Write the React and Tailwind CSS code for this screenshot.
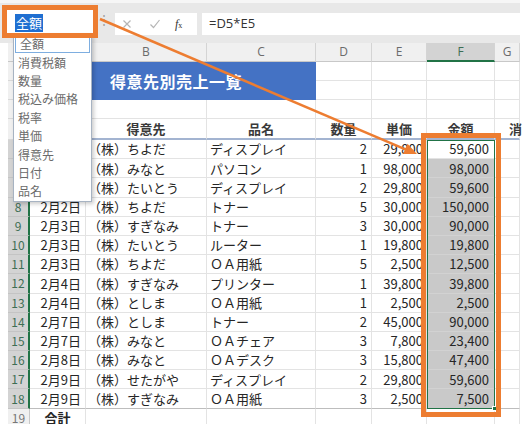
import React from "react";

const data = [
  ["2月1日", "（株）ちよだ", "ディスプレイ", "2", "29,800", "59,600"],
  ["2月1日", "（株）みなと", "パソコン", "1", "98,000", "98,000"],
  ["2月2日", "（株）たいとう", "ディスプレイ", "2", "29,800", "59,600"],
  ["2月2日", "（株）ちよだ", "トナー", "5", "30,000", "150,000"],
  ["2月3日", "（株）すぎなみ", "トナー", "3", "30,000", "90,000"],
  ["2月3日", "（株）たいとう", "ルーター", "1", "19,800", "19,800"],
  ["2月3日", "（株）ちよだ", "ＯＡ用紙", "5", "2,500", "12,500"],
  ["2月4日", "（株）すぎなみ", "プリンター", "1", "39,800", "39,800"],
  ["2月4日", "（株）としま", "ＯＡ用紙", "1", "2,500", "2,500"],
  ["2月7日", "（株）としま", "トナー", "2", "45,000", "90,000"],
  ["2月7日", "（株）みなと", "ＯＡチェア", "3", "7,800", "23,400"],
  ["2月8日", "（株）みなと", "ＯＡデスク", "3", "15,800", "47,400"],
  ["2月9日", "（株）せたがや", "ディスプレイ", "2", "29,800", "59,600"],
  ["2月9日", "（株）すぎなみ", "ＯＡ用紙", "3", "2,500", "7,500"],
];

const names = ["全額", "消費税額", "数量", "税込み価格", "税率", "単価", "得意先", "日付", "品名"];

const cellBase =
  "flex items-center border-r border-b border-[#e3e3e3] whitespace-nowrap text-[13px] text-[#262626]";

function RowHead({ n, selected, last }) {
  return (
    <div
      className={
        "flex items-center justify-center text-[12px] border-b " +
        (selected
          ? "bg-[#d3d3d3] text-[#3d6e54] border-r-2 border-r-[#217346] border-b-[#c4c4c4]"
          : "bg-[#f0f0f0] text-[#777] border-r border-r-[#c8c8c8] border-b-[#d8d8d8]")
      }
    >
      {n}
    </div>
  );
}

export default function App() {
  const cells = [];
  // column header row
  cells.push(<div key="corner" className="bg-[#f0f0f0] border-r border-b border-[#c8c8c8]" />);
  ["A", "B", "C", "D", "E", "F", "G"].forEach((c) => {
    const sel = c === "F";
    cells.push(
      <div
        key={"h" + c}
        className={
          "flex items-center justify-center text-[12px] font-['Open_Sans',sans-serif] border-r border-[#d4d4d4] " +
          (sel
            ? "bg-[#d3d3d3] text-[#3d6e54] border-b-2 border-b-[#217346]"
            : "bg-[#f0f0f0] text-[#6b6b6b] border-b border-b-[#c8c8c8]")
        }
      >
        {c}
      </div>
    );
  });
  // title
  cells.push(
    <div
      key="title"
      className="col-start-3 col-span-2 row-start-2 row-span-2 bg-[#4472c4] flex items-center pl-[24px] text-white text-[16px] font-bold tracking-[0.5px]"
    >
      得意先別売上一覧
    </div>
  );
  // rows 1-3
  [1, 2, 3].forEach((r) => {
    cells.push(<RowHead key={"rh" + r} n={r} />);
    const cols = r === 3 ? ["A", "B", "C", "D", "E", "F", "G"] : ["A", "D", "E", "F", "G"];
    cols.forEach((c) => cells.push(<div key={r + c} className={cellBase} />));
  });
  // row 4 header
  cells.push(<RowHead key="rh4" n={4} />);
  const hdr = ["", "得意先", "品名", "数量", "単価", "金額", "消"];
  hdr.forEach((h, i) => {
    cells.push(
      <div
        key={"r4" + i}
        className={
          "flex items-center whitespace-nowrap text-[13px] font-bold text-[#3a3a3a] border-r border-r-[#e3e3e3] border-b-2 border-b-[#a3b4d1] " +
          (i === 6 ? "pl-[14px] overflow-visible" : "justify-center")
        }
      >
        {h}
      </div>
    );
  });
  // data rows
  data.forEach((row, idx) => {
    const r = idx + 5;
    const last = r === 18;
    const bb = last ? " border-b-[#bdbdbd]" : "";
    cells.push(<RowHead key={"rh" + r} n={r} selected />);
    cells.push(
      <div key={r + "A"} className={cellBase + bb + " justify-end pr-[4px]"}>
        {row[0]}
      </div>
    );
    cells.push(
      <div key={r + "B"} className={cellBase + bb + " pl-[2px]"}>
        {row[1]}
      </div>
    );
    cells.push(
      <div key={r + "C"} className={cellBase + bb + " pl-[3px]"}>
        {row[2]}
      </div>
    );
    cells.push(
      <div key={r + "D"} className={cellBase + bb + " justify-end pr-[4px]"}>
        {row[3]}
      </div>
    );
    cells.push(
      <div key={r + "E"} className={cellBase + bb + " justify-end pr-[3px]"}>
        {row[4]}
      </div>
    );
    cells.push(
      <div
        key={r + "F"}
        className={
          cellBase +
          bb +
          " justify-end pr-[5px] " +
          (r === 5 ? "bg-white" : "bg-[#c9c9c9] border-b-[#d2d2d2]")
        }
      >
        {row[5]}
      </div>
    );
    cells.push(<div key={r + "G"} className={cellBase + bb} />);
  });
  // row 19
  cells.push(<RowHead key="rh19" n={19} />);
  cells.push(
    <div key="19A" className={cellBase + " justify-center font-bold"}>
      合計
    </div>
  );
  ["B", "C", "D", "E", "F", "G"].forEach((c) => cells.push(<div key={"19" + c} className={cellBase} />));

  return (
    <div className="relative w-[525px] h-[424px] overflow-hidden bg-white font-['Noto_Sans_CJK_JP',sans-serif]">
      {/* formula bar */}
      <div className="flex items-start w-[520px] h-[43px] bg-[#e8e8e8] border-t-[3px] border-[#f6f6f6] pl-[7px]">
        <div className="mt-[7px] w-[86px] h-[25px] bg-white flex items-center pl-[8px]">
          <span className="bg-[#1f6fd1] text-white text-[13px] leading-[18px] px-[1px]">全額</span>
        </div>
        <div className="w-[22px] h-[32px] flex items-center pl-[5px] text-[#9a9a9a] text-[12px]">⋮</div>
        <div className="mt-[10px] w-[82px] h-[22px] bg-white flex items-center pl-[6px]">
          <svg width="12" height="12" viewBox="0 0 12 12">
            <path d="M2.5 2.5 L9.5 9.5 M9.5 2.5 L2.5 9.5" stroke="#b5b5b5" strokeWidth="1.2" fill="none" />
          </svg>
          <svg className="ml-[16px]" width="12" height="12" viewBox="0 0 12 12">
            <path d="M1.5 6.5 L4.5 9.5 L10.5 2" stroke="#b5b5b5" strokeWidth="1.2" fill="none" />
          </svg>
          <span className="ml-[14px] text-[12px] text-[#333] italic font-['Liberation_Serif',serif] leading-none">
            f<span className="text-[8px] not-italic">x</span>
          </span>
        </div>
        <div className="mt-[10px] ml-[5px] w-[318px] h-[22px] bg-white flex items-center pl-[7px] text-[13px] text-[#333] font-['Open_Sans',sans-serif]">
          =D5*E5
        </div>
      </div>

      {/* sheet */}
      <div className="ml-[8px] w-[512px] grid grid-cols-[22px_56px_121px_109px_56px_55px_68px_25px] grid-rows-[19px_19px_19px_19px_21px_repeat(14,19.2px)_19px]">
        {cells}
      </div>

      {/* selection border F5:F18 */}
      <div className="absolute left-[427px] top-[140px] w-[68px] h-[269px] border border-[#217346]" />
      <div className="absolute left-[492px] top-[406px] w-[5px] h-[5px] bg-[#217346] border border-white" />

      {/* name list dropdown */}
      <div className="absolute left-[13px] top-[34px] w-[79px] bg-white border border-[#a7b3c2] shadow-[2px_2px_4px_rgba(0,0,0,0.2)] text-[12px] text-[#6a6a6a]">
        {names.map((n, i) => (
          <div
            key={n}
            className={
              "h-[18.4px] flex items-center pl-[4px] " +
              (i === 0 ? "mx-[1px] pl-[3px] border border-[#7eaee0]" : "")
            }
          >
            {n}
          </div>
        ))}
      </div>

      {/* orange highlight boxes */}
      <div className="absolute left-[2px] top-[5px] w-[96px] h-[33px] border-[5px] border-[#ed7d31]" />
      <div className="absolute left-[421px] top-[133px] w-[80px] h-[284px] border-[5px] border-[#ed7d31]" />

      {/* arrow */}
      <svg className="absolute left-0 top-0 pointer-events-none" width="525" height="424">
        <line x1="100" y1="19" x2="406" y2="149.7" stroke="#ed7d31" strokeWidth="2.5" />
        <polygon points="417,154 403,153.9 407.5,143.8" fill="#ed7d31" />
      </svg>
    </div>
  );
}
